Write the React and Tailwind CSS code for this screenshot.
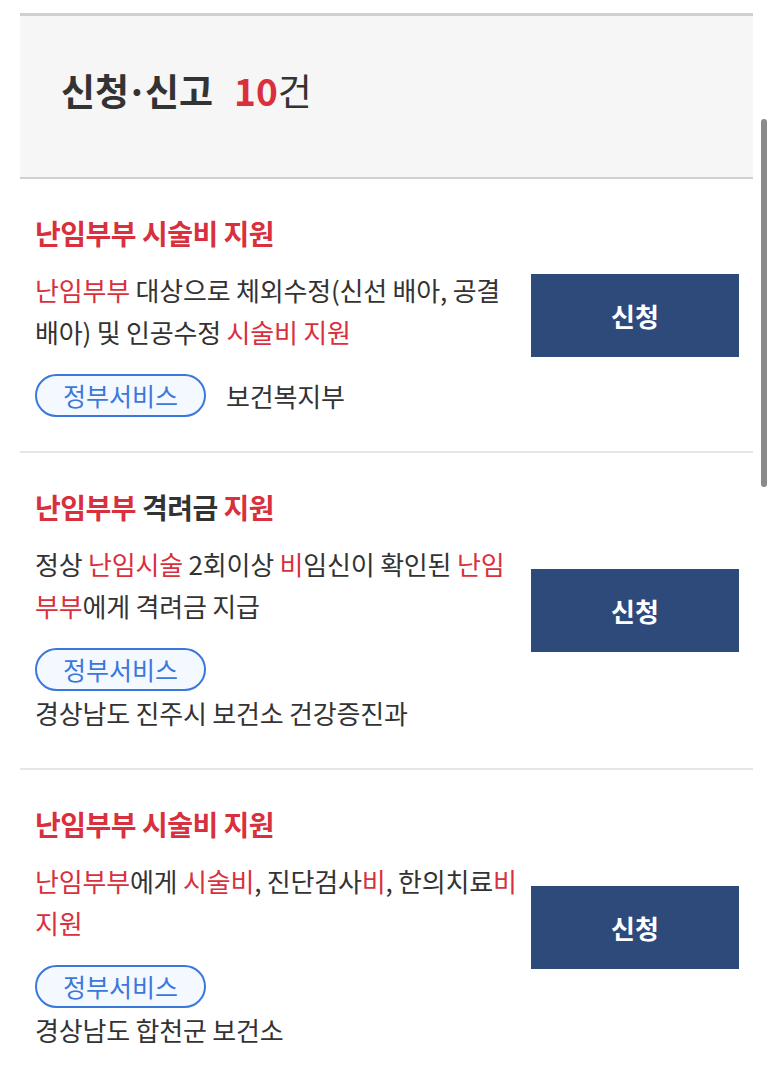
const R = ({ children }) => <span className="text-[#d9303e]">{children}</span>;

function Card({ title, desc, org, wrapOrg, last }) {
  return (
    <div className={"flex items-center pl-[15px] pr-[14px] pt-[34px] pb-[34px] " + (last ? "" : "border-b-2 border-[#e6e6e6]")}>
      <div className="w-[490px] shrink-0">
        <div className="text-[28px] leading-[40px] font-bold text-[#333] tracking-[-0.5px]">{title}</div>
        <div className="mt-[16px] text-[26px] leading-[42px] text-[#333] tracking-[-0.2px]">{desc}</div>
        <div className={"mt-[21px] flex " + (wrapOrg ? "flex-col items-start" : "items-center gap-[20px]")}>
          <span className="inline-flex h-[43px] items-center rounded-full border-2 border-[#3b78dc] bg-[#f4f8ff] px-[26px] text-[25px] text-[#3b78dc]">
            정부서비스
          </span>
          <span className="text-[26px] leading-[43px] text-[#333] tracking-[-0.2px]">{org}</span>
        </div>
      </div>
      <div className="ml-[6px] flex h-[83px] w-[208px] shrink-0 items-center justify-center bg-[#2e4a7b] text-[26px] font-bold text-white">
        신청
      </div>
    </div>
  );
}

export default function App() {
  return (
    <div className="relative min-h-[1083px] w-[773px] overflow-hidden bg-white pt-[13px]" style={{ fontFamily: '"Noto Sans CJK KR", "Noto Sans", sans-serif' }}>
      <div className="mx-[20px]">
        <div className="flex h-[166px] items-center border-t-[3px] border-b-2 border-[#d0d0d0] bg-[#f6f6f6] pb-[12px] pl-[41px]">
          <span className="text-[37px] font-bold text-[#333]">
            신청<span className="mx-[-3px]">·</span>신고
          </span>
          <span className="ml-[21px] text-[37px] font-bold text-[#d9303e]">10</span>
          <span className="text-[37px] text-[#333]">건</span>
        </div>
        <Card
          title={<R>난임부부 시술비 지원</R>}
          desc={<><R>난임부부</R> 대상으로 체외수정(신선 배아, 공결 배아) 및 인공수정 <R>시술비 지원</R></>}
          org="보건복지부"
        />
        <Card
          title={<><R>난임부부</R> 격려금 <R>지원</R></>}
          desc={<>정상 <R>난임시술</R> 2회이상 <R>비</R>임신이 확인된 <R>난임부부</R>에게 격려금 지급</>}
          org="경상남도 진주시 보건소 건강증진과"
          wrapOrg
        />
        <Card
          title={<R>난임부부 시술비 지원</R>}
          desc={<><R>난임부부</R>에게 <R>시술비</R>, 진단검사<R>비</R>, 한의치료<R>비</R> <R>지원</R></>}
          org="경상남도 합천군 보건소"
          wrapOrg
          last
        />
      </div>
      <div className="absolute left-[761px] top-[119px] h-[368px] w-[6px] rounded-full bg-[#8a8a8a]" />
    </div>
  );
}
